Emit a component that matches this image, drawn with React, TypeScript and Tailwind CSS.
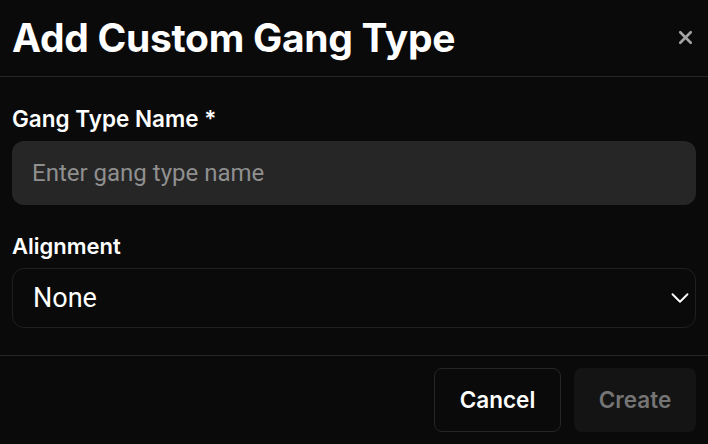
import React from "react";
import { X, ChevronDown } from "lucide-react";

const App: React.FC = () => {
  return (
    <div className="flex h-[444px] w-[708px] flex-col bg-[#0a0a0a] font-['Inter',sans-serif] text-white">
      <div className="flex h-[77px] items-center justify-between border-b border-[#262626] px-3">
        <h2 className="text-[39px] font-bold tracking-[-0.3px]">Add Custom Gang Type</h2>
        <button className="-mt-0.5 text-[#a3a3a3]">
          <X size={21} strokeWidth={3} />
        </button>
      </div>

      <div className="flex flex-1 flex-col px-3 pt-[28px]">
        <label className="text-[22.5px] font-semibold leading-7">Gang Type Name *</label>
        <div className="mt-[8px] flex h-[64px] items-center rounded-xl bg-[#262626] px-5 font-['Roboto',sans-serif] text-[24px] text-[#8f8f8f]">
          Enter gang type name
        </div>

        <label className="mt-[27px] text-[22px] font-semibold leading-7">Alignment</label>
        <div className="mt-[8px] flex h-[60px] items-center justify-between rounded-xl border border-[#1f1f1f] pl-5 pr-0 font-['Roboto',sans-serif] text-[27px]">
          <span>None</span>
          <ChevronDown size={30} strokeWidth={1.5} className="text-white" />
        </div>
      </div>

      <div className="flex h-[89px] items-center justify-end gap-[13px] border-t border-[#262626] px-3">
        <button className="h-[64px] w-[127px] rounded-lg border border-[#262626] text-[22.5px] font-semibold">
          Cancel
        </button>
        <button className="h-[64px] w-[122px] rounded-lg bg-[#141414] text-[22.5px] font-semibold text-[#757575]">
          Create
        </button>
      </div>
    </div>
  );
};

export default App;
